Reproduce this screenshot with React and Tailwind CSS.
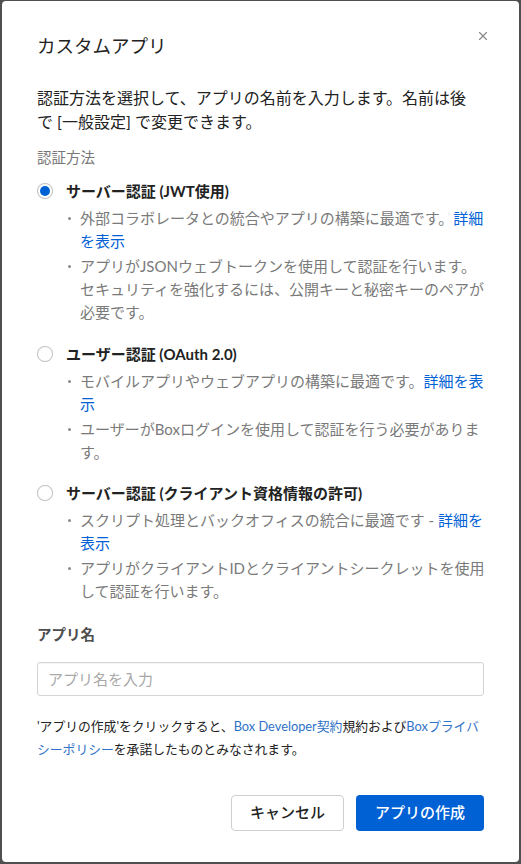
import { X } from 'lucide-react'

const methods = [
  {
    id: 'jwt',
    label: 'サーバー認証 (JWT使用)',
    checked: true,
    bullets: [
      ['外部コラボレータとの統合やアプリの構築に最適です。', '詳細を表示'],
      ['アプリがJSONウェブトークンを使用して認証を行います。\nセキュリティを強化するには、公開キーと秘密キーのペアが必要です。'],
    ],
  },
  {
    id: 'oauth',
    label: 'ユーザー認証 (OAuth 2.0)',
    bullets: [
      ['モバイルアプリやウェブアプリの構築に最適です。', '詳細を表示'],
      ['ユーザーがBoxログインを使用して認証を行う必要があります。'],
    ],
  },
  {
    id: 'ccg',
    label: 'サーバー認証 (クライアント資格情報の許可)',
    bullets: [
      ['スクリプト処理とバックオフィスの統合に最適です - ', '詳細を表示'],
      ['アプリがクライアントIDとクライアントシークレットを使用して認証を行います。'],
    ],
  },
]

const Radio = ({ checked }) => (
  <span className="flex h-4 w-4 shrink-0 items-center justify-center rounded-full border border-[#c4c4c4] bg-white shadow-[0_0_1px_rgba(0,0,0,0.15)]">
    {checked && <span className="h-[10px] w-[10px] rounded-full bg-[#0061d5]" />}
  </span>
)

const MethodOption = ({ method, className }) => (
  <div className={className}>
    {/* radio + label */}
    <div className="flex items-center gap-[13px] leading-[22px]">
      <Radio checked={method.checked} />
      <span className="text-[15px] font-bold text-[#222]">{method.label}</span>
    </div>
    <ul className="ml-[29px] mt-[5px] flex flex-col gap-[2px]">
      {method.bullets.map(([text, link], idx) => (
        <li key={idx} className="flex text-[15px] leading-[23px] text-[#7a7a7a]">
          <span className="flex h-[23px] w-[14px] shrink-0 items-center">
            <span className="ml-[2px] h-[3px] w-[3px] rounded-full bg-[#8a8a8a]" />
          </span>
          <span className="w-[411px] shrink-0 whitespace-pre-line">
            {text}
            {link && <a className="text-[#0061d5]">{link}</a>}
          </span>
        </li>
      ))}
    </ul>
  </div>
)

export default function App() {
  return (
    <div className="h-[864px] bg-[#4f4f4f] px-[2px] pb-[2px] pt-px font-[Lato,'Noto_Sans_CJK_JP',sans-serif]">
      <div className="flex h-full flex-col rounded-[4px] bg-white px-[35px] pt-[31px]">
        {/* Header */}
        <div className="flex items-start justify-between">
          <h1 className="text-[18.5px] leading-[28px] text-[#222]">カスタムアプリ</h1>
          <button className="-mr-[9px] -mt-[6px] flex h-5 w-5 items-center justify-center text-[#8a8a8a]">
            <X size={14} strokeWidth={2} />
          </button>
        </div>

        <p className="mt-[26px] w-[440px] text-[16px] leading-[24px] text-[#222]">
          認証方法を選択して、アプリの名前を入力します。名前は後で [一般設定] で変更できます。
        </p>

        <div className="mt-[14px] text-[14.5px] leading-[20px] text-[#777]">認証方法</div>

        <MethodOption method={methods[0]} className="mt-[12px]" />
        <MethodOption method={methods[1]} className="mt-[19px]" />
        <MethodOption method={methods[2]} className="mt-[18px]" />

        {/* App name */}
        <label className="mt-[22px] text-[14.5px] font-bold leading-[20px] text-[#4e4e4e]">アプリ名</label>
        <input
          className="mt-[17px] h-[34px] rounded-[3px] border border-[#d4d4d4] px-[10px] text-[15px] text-[#222] shadow-[inset_0_1px_1px_rgba(0,0,0,0.04)] outline-none placeholder:text-[#a8a8a8]"
          placeholder="アプリ名を入力"
        />

        <p className="mt-[18.5px] text-[12.8px] leading-[23px] text-[#222]">
          'アプリの作成'をクリックすると、<a className="text-[#2f72c8]">Box Developer契約</a>規約および<a className="text-[#2f72c8]">Boxプライバシーポリシー</a>を承諾したものとみなされます。
        </p>

        {/* Footer */}
        <div className="mt-[34px] flex justify-end gap-[12px]">
          <button className="h-9 w-[113px] rounded-[4px] border border-[#cfcfcf] bg-white text-[15px] font-medium text-[#222]">
            キャンセル
          </button>
          <button className="h-9 w-[128px] rounded-[4px] bg-[#0061d5] text-[15px] font-medium text-white">
            アプリの作成
          </button>
        </div>
      </div>
    </div>
  )
}
